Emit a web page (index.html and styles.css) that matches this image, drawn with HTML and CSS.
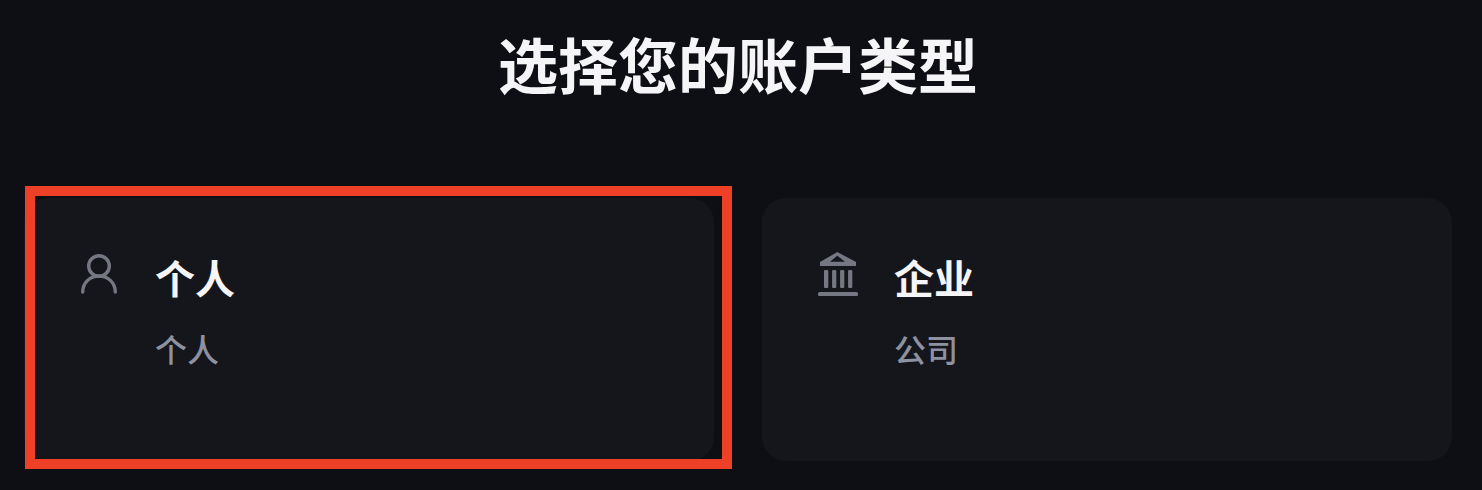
FILE: index.html
```html
<!DOCTYPE html>
<html lang="zh">
<head>
<meta charset="utf-8">
<title>选择您的账户类型</title>
<link rel="stylesheet" href="styles.css">
</head>
<body>
<main class="page">
  <h1 class="title">选择您的账户类型</h1>
  <div class="cards">
    <section class="card">
      <svg class="icon" viewBox="0 0 40 44" fill="none" stroke="currentColor" stroke-width="3.4" stroke-linecap="round"><circle cx="19" cy="14" r="10.300"/><path d="M2.700 40c0-9 7-16 16.300-16s16.300 7 16.300 16"/></svg>
      <div class="text">
        <div class="name">个人</div>
        <div class="desc">个人</div>
      </div>
      <div class="highlight"></div>
    </section>
    <section class="card card-business">
      <svg class="icon" viewBox="0 0 40 44" fill="currentColor"><path d="M19.300 0 38 10v4H2v-4zM19.300 3.700 12 9.700h15z" fill-rule="evenodd"/><rect x="6" y="18" width="4.300" height="18" rx="1"/><rect x="14.100" y="18" width="4.200" height="18" rx="1"/><rect x="22.100" y="18" width="4.200" height="18" rx="1"/><rect x="30.100" y="18" width="4.200" height="18" rx="1"/><rect x="0" y="40" width="40" height="4" rx="1.500"/></svg>
      <div class="text">
        <div class="name">企业</div>
        <div class="desc">公司</div>
      </div>
    </section>
  </div>
</main>
</body>
</html>
```
FILE: styles.css
```css
html, body {
  margin: 0;
  height: 100%;
  background: #0e0f14;
  overflow: hidden;
}
.page {
  padding: 27px 30px 0 24px;
  font-family: "Noto Sans CJK SC", "Inter", sans-serif;
}
.title {
  margin: 0 0 99px;
  height: 72px;
  line-height: 72px;
  font-size: 60px;
  font-weight: 700;
  text-align: center;
  color: #f5f5f7;
}
.cards {
  display: grid;
  grid-template-columns: 1fr 1fr;
  gap: 48px;
}
.card {
  position: relative;
  display: flex;
  gap: 35px;
  height: 263px;
  padding: 54px 56px 0;
  box-sizing: border-box;
  background: #15161c;
  border-radius: 24px;
}
.card-business {
  gap: 36px;
}
.icon {
  flex: none;
  width: 40px;
  height: 44px;
  color: #757783;
}
.text {
  display: flex;
  flex-direction: column;
}
.name {
  font-size: 40px;
  line-height: 50px;
  font-weight: 700;
  color: #f5f5f7;
}
.desc {
  margin-top: 24px;
  font-size: 32px;
  line-height: 44px;
  font-weight: 500;
  color: #8e92a0;
}
.highlight {
  position: absolute;
  left: 1px;
  top: -12px;
  width: 707px;
  height: 283px;
  box-sizing: border-box;
  border: 10px solid #ee4026;
}
```
